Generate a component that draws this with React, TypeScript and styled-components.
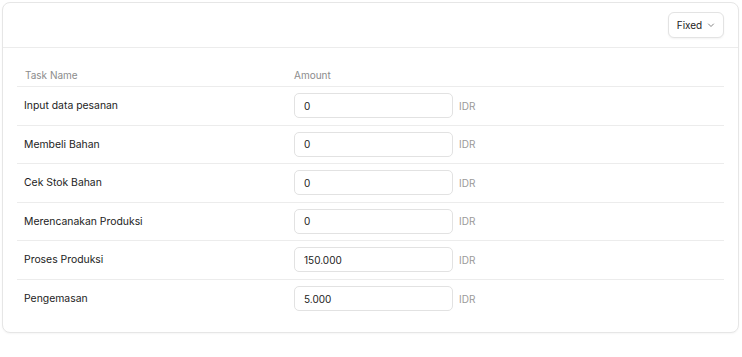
import styled, { createGlobalStyle } from "styled-components";

const GlobalStyle = createGlobalStyle`
  html, body {
    margin: 0;
    padding: 0;
    background: #ffffff;
    font-family: Inter, "Liberation Sans", sans-serif;
  }
  * {
    box-sizing: border-box;
  }
`;

const Page = styled.div`
  padding: 2px 3px 2px 2px;
`;

const Card = styled.div`
  border: 1px solid #e6e6e6;
  border-radius: 8px;
  background: #fff;
  box-shadow: 0 1px 2px rgba(0, 0, 0, 0.04);
`;

const Header = styled.div`
  display: flex;
  justify-content: flex-end;
  align-items: center;
  padding: 9px 14px;
  border-bottom: 1px solid #ececec;
`;

const SelectButton = styled.button`
  display: flex;
  align-items: center;
  justify-content: center;
  gap: 5px;
  height: 26px;
  width: 56px;
  padding: 0;
  border: 1px solid #e3e3e3;
  border-radius: 6px;
  background: #fff;
  box-shadow: 0 1px 2px rgba(0, 0, 0, 0.05);
  font-family: inherit;
  font-size: 10px;
  color: #222;
  cursor: pointer;

  svg {
    flex-shrink: 0;
  }
`;

const Body = styled.div`
  padding: 16px 14px 14px;
`;

const Row = styled.div<{ $head?: boolean; $last?: boolean }>`
  display: grid;
  grid-template-columns: 269px 1fr;
  align-items: center;
  height: ${(p) => (p.$head ? "23px" : "38.5px")};
  border-bottom: ${(p) => (p.$last ? "none" : "1px solid #ececec")};
`;

const HeadCell = styled.div`
  padding: 0 7px 0 8px;
  font-size: 10px;
  color: #8c8c8c;
`;

const NameCell = styled.div`
  padding: 0 7px;
  font-size: 10.4px;
  color: #1c1c1c;
`;

const AmountCell = styled.div`
  display: flex;
  align-items: center;
  gap: 6px;
  padding: 0 8px;
`;

const AmountInput = styled.input`
  width: 159px;
  height: 25px;
  padding: 0 9px;
  border: 1px solid #e2e2e2;
  border-radius: 5px;
  font-family: inherit;
  font-size: 10px;
  color: #222;
  background: #fff;
  outline: none;
`;

const Unit = styled.span`
  font-size: 10px;
  color: #9a9a9a;
`;

const tasks = [
  { name: "Input data pesanan", amount: "0" },
  { name: "Membeli Bahan", amount: "0" },
  { name: "Cek Stok Bahan", amount: "0" },
  { name: "Merencanakan Produksi", amount: "0" },
  { name: "Proses Produksi", amount: "150.000" },
  { name: "Pengemasan", amount: "5.000" },
];

function Chevron() {
  return (
    <svg width="8" height="8" viewBox="0 0 8 8" fill="none">
      <path d="M1.5 3 L4 5.5 L6.5 3" stroke="#777" strokeWidth="0.9" strokeLinecap="round" strokeLinejoin="round" />
    </svg>
  );
}

export default function App() {
  return (
    <Page>
      <GlobalStyle />
      <Card>
        <Header>
          <SelectButton>
            <span>Fixed</span>
            <Chevron />
          </SelectButton>
        </Header>
        <Body>
          <Row $head>
            <HeadCell>Task Name</HeadCell>
            <HeadCell>Amount</HeadCell>
          </Row>
          {tasks.map((t, i) => (
            <Row key={t.name} $last={i === tasks.length - 1}>
              <NameCell>{t.name}</NameCell>
              <AmountCell>
                <AmountInput defaultValue={t.amount} />
                <Unit>IDR</Unit>
              </AmountCell>
            </Row>
          ))}
        </Body>
      </Card>
    </Page>
  );
}
